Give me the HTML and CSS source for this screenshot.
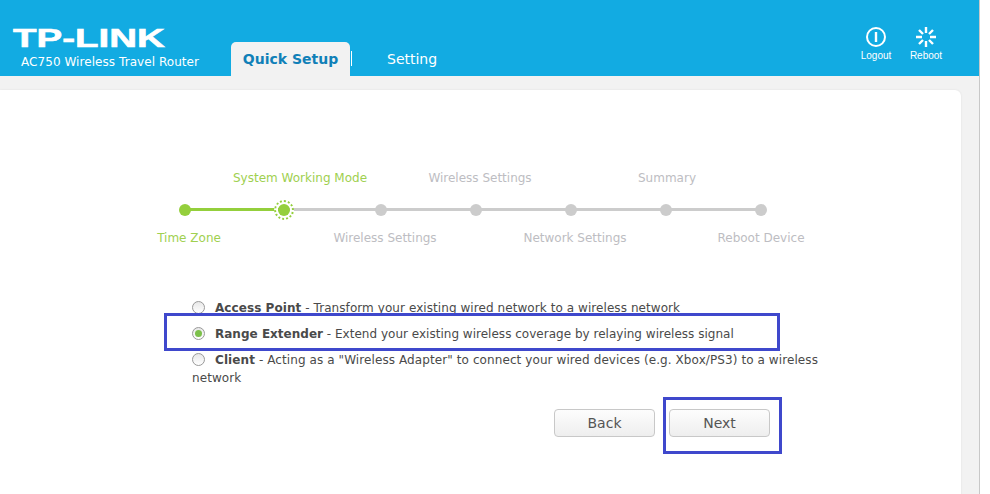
FILE: index.html
```html
<!DOCTYPE html>
<html lang="en">
<head>
<meta charset="utf-8">
<title>TP-LINK Quick Setup</title>
<link rel="stylesheet" href="styles.css">
</head>
<body>
<div class="page">
  <header class="top">
    <div class="brand">
      <div class="logo">TP-LINK</div>
      <div class="model">AC750 Wireless Travel Router</div>
    </div>
    <nav class="tabs">
      <div class="tab active">Quick Setup</div>
      <div class="tab-sep"></div>
      <div class="tab">Setting</div>
    </nav>
    <div class="actions">
      <div class="action">
        <svg width="22" height="22" viewBox="0 0 22 22"><circle cx="11" cy="11" r="9" fill="none" stroke="#fff" stroke-width="2"/><path d="M11 6v10" stroke="#fff" stroke-width="2.4"/></svg>
        <span>Logout</span>
      </div>
      <div class="action">
        <svg width="22" height="22" viewBox="0 0 22 22" stroke="#fff" stroke-width="2.4"><path d="M11 1v6M11 15v6M1 11h6M15 11h6M4 4l4 4M14 14l4 4M18 4l-4 4M8 14l-4 4"/></svg>
        <span>Reboot</span>
      </div>
    </div>
  </header>
  <main class="content">
    <section class="card">
      <div class="steps">
        <div class="labels upper">
          <span class="l-green">System Working Mode</span>
          <span>Wireless Settings</span>
          <span>Summary</span>
        </div>
        <div class="track">
          <span class="seg done"></span><span class="seg"></span><span class="seg"></span><span class="seg"></span><span class="seg"></span><span class="seg"></span>
          <span class="dot done"></span>
          <span class="dot current"></span>
          <span class="dot"></span><span class="dot"></span><span class="dot"></span><span class="dot"></span><span class="dot"></span>
        </div>
        <div class="labels lower">
          <span class="l-green">Time Zone</span>
          <span>Wireless Settings</span>
          <span>Network Settings</span>
          <span>Reboot Device</span>
        </div>
      </div>
      <div class="options">
        <p class="opt opt-ap"><span class="radio"></span><b>Access Point</b> - Transform your existing wired network to a wireless network</p>
        <p class="opt opt-re"><span class="radio on"></span><b>Range Extender</b> - Extend your existing wireless coverage by relaying wireless signal</p>
        <p class="opt opt-cl"><span class="radio"></span><b>Client</b> - Acting as a "Wireless Adapter" to connect your wired devices (e.g. Xbox/PS3) to a wireless network</p>
      </div>
      <div class="buttons">
        <button class="btn">Back</button>
        <button class="btn">Next</button>
      </div>
    </section>
  </main>
  <div class="mark mark-option"></div>
  <div class="mark mark-next"></div>
</div>
</body>
</html>
```
FILE: styles.css
```css
* { box-sizing: border-box; }
html, body { margin: 0; height: 100%; background: #fff; overflow: hidden; }
.page {
  position: relative;
  width: 980px;
  height: 494px;
  background: #f2f2f2;
  border-right: 1px solid #c8c8c8;
  font-family: "DejaVu Sans", Verdana, sans-serif;
  font-size: 12px;
  color: #4a4a4a;
  overflow: hidden;
}
.top {
  height: 76px;
  background: #12abe2;
  display: flex;
  color: #fff;
}
.brand { width: 231px; padding: 26px 0 0 13px; }
.logo {
  font-family: "Liberation Sans", Arial, sans-serif;
  font-weight: 700;
  font-size: 26px;
  line-height: 24px;
  height: 24px;
  transform: scaleX(1.48);
  transform-origin: left center;
  -webkit-text-stroke: 0.6px #fff;
}
.model { font-size: 12px; line-height: 14px; margin: 5px 0 0 8px; letter-spacing: 0.06px; }
.tabs { display: flex; align-items: flex-end; }
.tab { font-size: 14px; line-height: 34px; height: 34px; }
.tab.active {
  width: 119px;
  background: #f2f2f2;
  border-radius: 5px 5px 0 0;
  color: #1080b8;
  font-weight: 700;
  text-align: center;
}
.tab-sep { width: 1px; height: 15px; background: #fff; margin: 0 35px 10px 1px; align-self: flex-end; }
.actions { margin-left: auto; display: flex; gap: 14px; padding: 26px 35px 0 0; }
.action { width: 36px; display: flex; flex-direction: column; align-items: center; gap: 2px; font-size: 10px; font-family: "Liberation Sans", Arial, sans-serif; }
.action span { line-height: 11px; }
.action svg { display: block; }
.content { padding: 14px 18px 0 0; height: 418px; }
.card {
  background: #fff;
  height: 420px;
  border-radius: 0 6px 0 0;
  box-shadow: 0 0 2px #ddd;
  padding-top: 80px;
}
.steps { position: relative; height: 129px; }
.labels { position: relative; height: 16px; color: #bdbdc2; line-height: 16px; }
.labels span { position: absolute; top: 0; white-space: nowrap; transform: translateX(-50%); }
.upper span:nth-child(1) { left: 300px; }
.upper span:nth-child(2) { left: 480px; }
.upper span:nth-child(3) { left: 667px; }
.lower { top: 14px; }
.lower span:nth-child(1) { left: 189px; }
.lower span:nth-child(2) { left: 385px; }
.lower span:nth-child(3) { left: 575px; }
.lower span:nth-child(4) { left: 761px; }
.labels .l-green { color: #a0d050; }
.track { position: relative; height: 12px; margin-top: 18px; }
.seg { position: absolute; top: 4px; height: 3px; width: 95px; background: #ccc; }
.seg.done { background: #94cf3c; width: 100px; }
.seg:nth-child(1) { left: 185px; }
.seg:nth-child(2) { left: 285px; }
.seg:nth-child(3) { left: 381px; }
.seg:nth-child(4) { left: 476px; }
.seg:nth-child(5) { left: 571px; }
.seg:nth-child(6) { left: 666px; }
.dot { position: absolute; top: 0; width: 12px; height: 12px; margin-left: -6px; border-radius: 50%; background: #ccc; }
.dot.done { background: #94cf3c; }
.dot.current { background: #94cf3c; }
.dot.current::after { content: ""; position: absolute; inset: -4px; border: 2px dotted #94cf3c; border-radius: 50%; background: radial-gradient(circle, transparent 6px, #fff 6.5px); z-index: -1; }
.dot.current { z-index: 1; }
.dot:nth-child(7) { left: 185px; }
.dot:nth-child(8) { left: 284px; }
.dot:nth-child(9) { left: 381px; }
.dot:nth-child(10) { left: 476px; }
.dot:nth-child(11) { left: 571px; }
.dot:nth-child(12) { left: 666px; }
.dot:nth-child(13) { left: 761px; }
.options { padding: 0 0 0 192px; width: 835px; }
.opt { margin: 0 0 8px; line-height: 18px; }
.opt-ap { letter-spacing: 0.07px; }
.opt-re { letter-spacing: 0.015px; }
.opt-cl { letter-spacing: 0.09px; }
.radio {
  display: inline-block;
  vertical-align: -2px;
  width: 13px;
  height: 13px;
  margin-right: 10px;
  border: 1px solid #999;
  border-radius: 50%;
  background: linear-gradient(#e8e8e8, #fff);
}
.radio.on { position: relative; }
.radio.on::after { content: ""; position: absolute; inset: 2px; border-radius: 50%; background: #7cc04a; }
.buttons { display: flex; gap: 14px; padding: 14px 0 0 554px; }
.btn {
  width: 101px;
  height: 28px;
  border: 1px solid #c8c8c8;
  border-radius: 4px;
  background: linear-gradient(#fdfdfd, #eeeeee);
  font-family: inherit;
  font-size: 14px;
  color: #555;
  padding: 0;
}
.mark { position: absolute; border: 3px solid #3f48cc; }
.mark-option { left: 164px; top: 313px; width: 616px; height: 38px; }
.mark-next { left: 663px; top: 397px; width: 119px; height: 57px; }
```
